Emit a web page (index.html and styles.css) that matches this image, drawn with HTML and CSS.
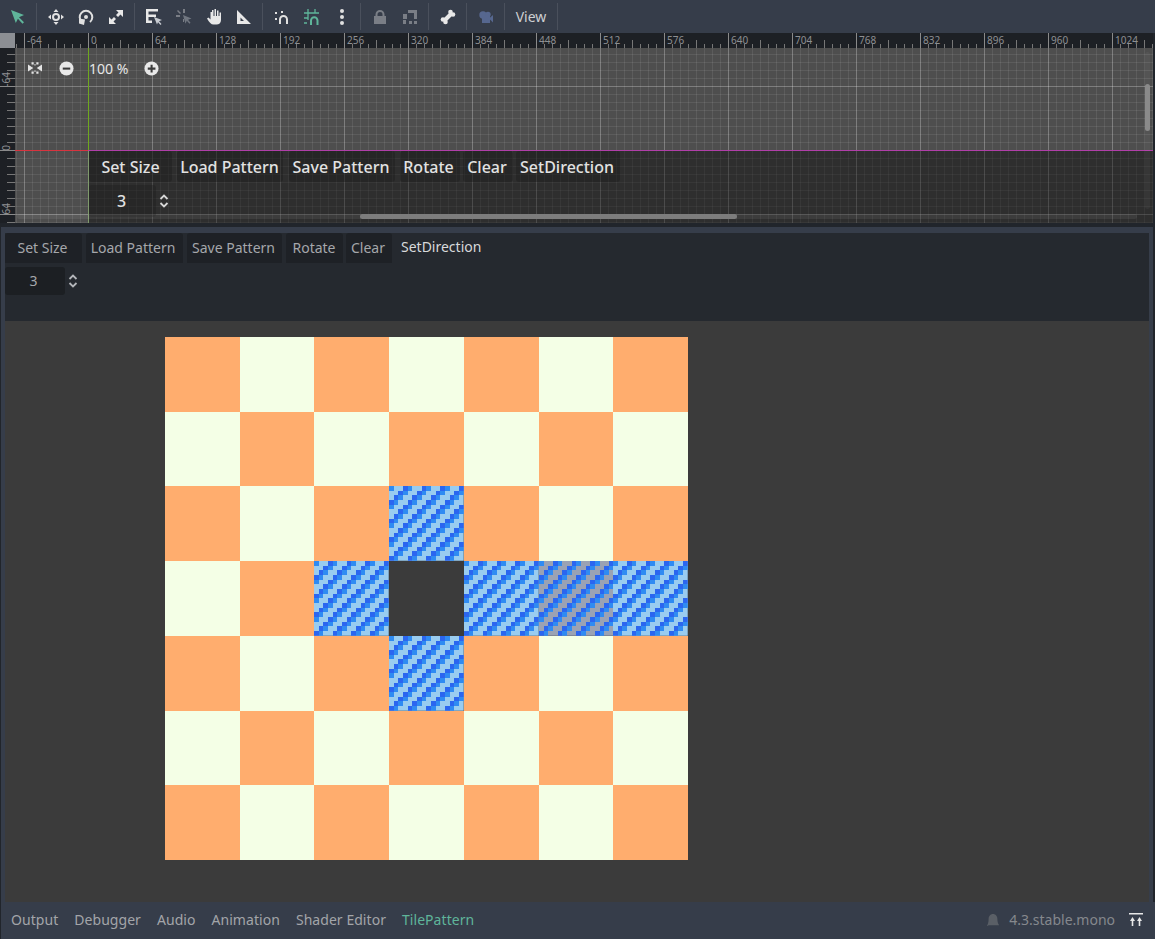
FILE: index.html
```html
<!DOCTYPE html>
<html lang="en">
<head>
    <meta charset="UTF-8">
    <title>TilePattern</title>
    <link rel="stylesheet" href="styles.css">
</head>

<body>
    <svg class="defs" width="0" height="0">
        <defs>
            <g id="t4">
                <path fill="#2b66f0" d="M3 0h1v1h-1zM2 1h1v1h-1zM1 2h1v1h-1zM0 3h1v1h-1z"/>
                <path fill="#2f8bf2" d="M0 0h1v1h-1zM3 1h1v1h-1zM2 2h1v1h-1zM1 3h1v1h-1z"/>
            </g>
            <g id="t8">
                <use href="#t4"/><use href="#t4" x="4"/><use href="#t4" y="4"/><use href="#t4" x="4" y="4"/>
            </g>
            <symbol id="tile" viewBox="0 0 16 16" shape-rendering="crispEdges">
                <rect width="16" height="16" fill="currentColor"/>
                <use href="#t8"/><use href="#t8" x="8"/><use href="#t8" y="8"/><use href="#t8" x="8" y="8"/>
            </symbol>
        </defs>
    </svg>

    <div class="toolbar">
        <div class="tool">
            <svg class="icon" viewBox="0 0 16 16"><path fill="#5fb59a" d="M1 1l13 5-5 2.200 5 5-1.500 1.500-4.600-5L5.800 14z"/></svg>
        </div>
        <span class="sep"></span>
        <div class="tool">
            <svg class="icon" viewBox="0 0 16 16"><path fill="#e0e0e0" d="M8 0l2.500 3h-5zM8 16l-2.500-3h5zM0 8l3-2.500v5zM16 8l-3 2.500v-5z"/><circle cx="8" cy="8" r="3" fill="none" stroke="#e0e0e0" stroke-width="2"/></svg>
        </div>
        <div class="tool">
            <svg class="icon" viewBox="0 0 16 16"><path fill="none" stroke="#e0e0e0" stroke-width="2" d="M4 13a6.300 6.300 0 1 1 8 0"/><path fill="#e0e0e0" d="M1 9.500l6 1-1 5.500-5-1.500z"/><circle cx="8" cy="8" r="2" fill="#e0e0e0"/></svg>
        </div>
        <div class="tool">
            <svg class="icon" viewBox="0 0 16 16"><path fill="#e8e8e8" d="M8 1h7v7l-2.500-2.500L10 8 8 6l2.500-2.500zM8 15H1V8l2.500 2.500L6 8l2 2-2.500 2.500z"/></svg>
        </div>
        <span class="sep"></span>
        <div class="tool">
            <svg class="icon" viewBox="0 0 16 16"><path fill="#e8e8e8" d="M0 0h12v2.500H2.500v3H10V8H2.500v3.500H6V14H0z"/><path fill="#c8ccd2" d="M8 8l8 3-3 1.300 2.500 2.700-1 1-2.500-2.700L11 15.500z"/></svg>
        </div>
        <div class="tool">
            <svg class="icon dim" viewBox="0 0 16 16"><path fill="#e0e0e0" d="M7 0h2v4H7zM0 6h4v2H0zM7 10h1v3H7zM2 1l3 3-1 1-3-3z"/><path fill="#c8ccd2" d="M7 6l8.500 3.500-3.500 1.300 2.500 3-1 1-2.700-3-1.300 3z"/></svg>
        </div>
        <div class="tool">
            <svg class="icon" viewBox="0 0 16 16"><path fill="#e8e8e8" d="M6 1h1.500v6H8.500V0H10v7h1V1.500h1.500V7h1V3.500H15V11c0 3-2 4.500-4.500 4.500h-3C5 15.500 3.500 13.500 1 9.500L2.500 8.500 4.500 10.500V3h1.500z"/></svg>
        </div>
        <div class="tool">
            <svg class="icon" viewBox="0 0 16 16"><path fill="#e8e8e8" fill-rule="evenodd" d="M1 1l14 14H1zM4.500 8.500V12h3.500z"/></svg>
        </div>
        <span class="sep"></span>
        <div class="tool">
            <svg class="icon" viewBox="0 0 16 16"><path fill="none" stroke="#e0e0e0" stroke-width="2" d="M6 15V10.500a3.500 3.500 0 0 1 7 0V15"/><path fill="#e0e0e0" d="M1 3h2v2H1zM7 2h2v2H7zM1 9h2v2H1z"/></svg>
        </div>
        <div class="tool">
            <svg class="icon" viewBox="0 0 16 16"><path fill="none" stroke="#5fb59a" stroke-width="1.300" d="M4 0v11M11 0v4M0 4h15M0 9h4M0 14h3"/><path fill="none" stroke="#5fb59a" stroke-width="2" d="M7 16v-4.500a3 3 0 0 1 6.500 0V16"/></svg>
        </div>
        <div class="tool">
            <svg class="icon" viewBox="0 0 16 16"><circle cx="8" cy="2" r="2" fill="#e0e0e0"/><circle cx="8" cy="8" r="2" fill="#e0e0e0"/><circle cx="8" cy="14" r="2" fill="#e0e0e0"/></svg>
        </div>
        <span class="sep"></span>
        <div class="tool">
            <svg class="icon dim" viewBox="0 0 16 16"><path fill="#e0e0e0" fill-rule="evenodd" d="M8 1a4.500 4.500 0 0 1 4.500 4.500V7H14v8H2V7h1.500V5.500A4.500 4.500 0 0 1 8 1zM8 3a2.500 2.500 0 0 0-2.500 2.500V7h5V5.500A2.500 2.500 0 0 0 8 3z"/></svg>
        </div>
        <div class="tool">
            <svg class="icon dim" viewBox="0 0 16 16"><path fill="#e0e0e0" d="M6 1h9v9h-3V4H6zM1 5h4v5H1zM1 11h3v4H1zM7 12h3v3H7zM12 12h3v3h-3z"/></svg>
        </div>
        <span class="sep"></span>
        <div class="tool">
            <svg class="icon" viewBox="0 0 16 16"><path fill="none" stroke="#e8e8e8" stroke-width="4" d="M4 12l8-8"/><circle cx="3" cy="10.500" r="2.300" fill="#e8e8e8"/><circle cx="5.500" cy="13" r="2.300" fill="#e8e8e8"/><circle cx="10.500" cy="3" r="2.300" fill="#e8e8e8"/><circle cx="13" cy="5.500" r="2.300" fill="#e8e8e8"/></svg>
        </div>
        <span class="sep"></span>
        <div class="tool">
            <svg class="icon" viewBox="0 0 16 16"><circle cx="5" cy="6" r="3.700" fill="#56678f"/><circle cx="10" cy="5.500" r="2.700" fill="#56678f"/><path fill="#56678f" d="M4 7h8v7H4zM11 9.500L15 6v7.500z"/></svg>
        </div>
        <span class="sep"></span>
        <div class="tool-text">View</div>
        <span class="sep"></span>
    </div>

    <div class="viewport-row">
        <div class="corner-col">
            <div class="corner"></div>
            <div class="ruler-v">
                <span>-64</span>
                <span>0</span>
                <span>64</span>
            </div>
        </div>
        <div class="viewport-col">
            <div class="ruler-h">
                <span>-64</span><span>0</span><span>64</span><span>128</span><span>192</span><span>256</span><span>320</span><span>384</span><span>448</span><span>512</span><span>576</span><span>640</span><span>704</span><span>768</span><span>832</span><span>896</span><span>960</span><span>1024</span>
            </div>
            <div class="viewport">
                <div class="scene-rect"></div>
                <div class="axis-y"></div>
                <div class="axis-x-neg"></div>
                <div class="axis-x-pos"></div>

                <div class="zoom-bar">
                    <svg class="icon-sm" viewBox="0 0 16 16"><path fill="#e4e4e4" d="M0 4l6 4-6 4zM16 4l-6 4 6 4zM4 1.500h2.500V4H4zM9.500 1.500H12V4H9.500zM4 12h2.500v2.500H4zM9.500 12H12v2.500H9.500zM6.500 4L8 5.500 9.500 4zM6.500 12L8 10.500 9.500 12z"/></svg>
                    <svg class="icon-zoom zoom-out" viewBox="0 0 16 16"><circle cx="8" cy="8" r="7.500" fill="#e8e8e8"/><path fill="#3a3a3a" d="M4 7h8v2.200H4z"/></svg>
                    <span class="zoom-label">100 %</span>
                    <svg class="icon-zoom" viewBox="0 0 16 16"><circle cx="8" cy="8" r="7.500" fill="#e8e8e8"/><path fill="#3a3a3a" d="M4 7h3V4h2.200v3h3v2.200h-3v3H7v-3H4z"/></svg>
                </div>

                <div class="scene-ui">
                    <div class="scene-row">
                        <button class="scene-btn b-size">Set Size</button>
                        <button class="scene-btn b-load">Load Pattern</button>
                        <button class="scene-btn b-save">Save Pattern</button>
                        <button class="scene-btn b-rotate">Rotate</button>
                        <button class="scene-btn b-clear">Clear</button>
                        <button class="scene-btn b-dir">SetDirection</button>
                    </div>
                    <div class="scene-spin">
                        <div class="scene-value">3</div>
                        <svg class="spin-arrows" viewBox="0 0 10 16"><path fill="none" stroke="#d8d8d8" stroke-width="1.800" d="M1.500 6L5 2.500 8.500 6M1.500 10L5 13.500 8.500 10"/></svg>
                    </div>
                </div>

                <div class="vscroll"><div class="vthumb"></div></div>
                <div class="hscroll"><div class="hthumb"></div></div>
            </div>
        </div>
    </div>

    <div class="editor">
        <div class="dock">
            <div class="dock-row">
                <button class="dock-btn d-size">Set Size</button>
                <button class="dock-btn d-load">Load Pattern</button>
                <button class="dock-btn d-save">Save Pattern</button>
                <button class="dock-btn d-rotate">Rotate</button>
                <button class="dock-btn d-clear">Clear</button>
                <div class="dock-flat">SetDirection</div>
            </div>
            <div class="dock-spin">
                <div class="dock-value">3</div>
                <svg class="spin-arrows" viewBox="0 0 10 16"><path fill="none" stroke="#b4b6ba" stroke-width="1.800" d="M1.500 6L5 2.500 8.500 6M1.500 10L5 13.500 8.500 10"/></svg>
            </div>
        </div>
        <div class="stage">
            <div class="board">
                <div class="o"></div><div class="w"></div><div class="o"></div><div class="w"></div><div class="o"></div><div class="w"></div><div class="o"></div>
                <div class="w"></div><div class="o"></div><div class="w"></div><div class="o"></div><div class="w"></div><div class="o"></div><div class="w"></div>
                <div class="o"></div><div class="w"></div><div class="o"></div><div class="p"><svg><use href="#tile"/></svg></div><div class="o"></div><div class="w"></div><div class="o"></div>
                <div class="w"></div><div class="o"></div><div class="p"><svg><use href="#tile"/></svg></div><div></div><div class="p"><svg><use href="#tile"/></svg></div><div class="p gray"><svg><use href="#tile"/></svg></div><div class="p"><svg><use href="#tile"/></svg></div>
                <div class="o"></div><div class="w"></div><div class="o"></div><div class="p"><svg><use href="#tile"/></svg></div><div class="o"></div><div class="w"></div><div class="o"></div>
                <div class="w"></div><div class="o"></div><div class="w"></div><div class="o"></div><div class="w"></div><div class="o"></div><div class="w"></div>
                <div class="o"></div><div class="w"></div><div class="o"></div><div class="w"></div><div class="o"></div><div class="w"></div><div class="o"></div>
            </div>
        </div>
    </div>

    <div class="bottom-bar">
        <span class="tab">Output</span>
        <span class="tab">Debugger</span>
        <span class="tab">Audio</span>
        <span class="tab">Animation</span>
        <span class="tab">Shader Editor</span>
        <span class="tab active">TilePattern</span>
        <div class="bottom-right">
            <svg class="bell" viewBox="0 0 16 16"><path fill="#5a5f66" d="M8 1c3 0 5 2.500 5 5.500 0 3 .5 5 2 7.500H3l-2 1c1-2 2-4 2-8.500C3 3.500 5 1 8 1z"/></svg>
            <span class="version">4.3.stable.mono</span>
            <svg class="expand" viewBox="0 0 16 16"><path fill="#e8e8e8" d="M1 1h14v1.500H1zM4.500 5L7 9H5.300v5H3.700V9H2zM11.500 5L14 9h-1.700v5h-1.600V9H9z"/></svg>
        </div>
    </div>
</body>
</html>
```

FILE: styles.css
```css
* {
    box-sizing: border-box;
}

html, body {
    margin: 0;
    height: 939px;
    overflow: hidden;
}

body {
    width: 1155px;
    background: #21252b;
    font-family: "Noto Sans", sans-serif;
    display: flex;
    flex-direction: column;
}

.defs {
    position: absolute;
}

/* top toolbar */
.toolbar {
    height: 33px;
    flex: none;
    background: #363d4a;
    display: flex;
    align-items: center;
    padding-left: 3px;
}

.tool {
    width: 30px;
    height: 31px;
    display: flex;
    align-items: center;
    justify-content: center;
}

.tool-text {
    width: 48px;
    padding-right: 4px;
    text-align: center;
    font-size: 14px;
    color: #cdcfd2;
}

.sep {
    width: 1px;
    height: 27px;
    margin: 0 4px 0 3px;
    background: #4a505c;
}

.toolbar .tool-text + .sep {
    margin-left: 0;
}

.icon {
    width: 16px;
    height: 16px;
}

.icon.dim {
    opacity: 0.4;
}

/* viewport with rulers */
.viewport-row {
    display: flex;
    height: 190px;
    flex: none;
    padding-right: 2px;
}

.corner-col {
    width: 15px;
    flex: none;
    display: flex;
    flex-direction: column;
}

.corner {
    height: 15px;
    background: #8c8f94;
}

.ruler-v {
    flex: 1;
    background-color: #1d2025;
    background-image:
        linear-gradient(to bottom, #8a8a8a 1px, transparent 1px),
        linear-gradient(to bottom, #777 1px, transparent 1px);
    background-size: 100% 64px, 8px 8px;
    background-position: 0 38px, 100% 6px;
    background-repeat: repeat-y;
    position: relative;
}

.ruler-v span {
    position: absolute;
    left: 1px;
    width: 11px;
    writing-mode: vertical-rl;
    transform: rotate(180deg);
    font-size: 10px;
    line-height: 11px;
    color: #8d8f92;
}

.ruler-v span:nth-child(1) { top: 24px; }
.ruler-v span:nth-child(2) { top: 97px; }
.ruler-v span:nth-child(3) { top: 155px; }

.viewport-col {
    flex: 1;
    display: flex;
    flex-direction: column;
    min-width: 0;
}

.ruler-h {
    height: 15px;
    flex: none;
    display: flex;
    overflow: hidden;
    background-color: #1d2025;
    background-image:
        linear-gradient(to right, #8a8a8a 1px, transparent 1px),
        linear-gradient(to right, #777 1px, transparent 1px),
        linear-gradient(to right, #777 1px, transparent 1px);
    background-size: 64px 100%, 32px 8px, 8px 4px;
    background-position: 9px 0, 9px 100%, 1px 100%;
    background-repeat: repeat-x;
    padding-left: 9px;
    font-size: 10px;
    line-height: 14px;
    color: #8d8f92;
}

.ruler-h span {
    width: 64px;
    flex: none;
    padding-left: 3px;
}

.viewport {
    flex: 1;
    position: relative;
    overflow: hidden;
    background-color: #4e4e4e;
    background-image:
        linear-gradient(to right, rgba(255, 255, 255, 0.2) 1px, transparent 1px),
        linear-gradient(to bottom, rgba(255, 255, 255, 0.2) 1px, transparent 1px),
        linear-gradient(to right, rgba(255, 255, 255, 0.08) 1px, transparent 1px),
        linear-gradient(to bottom, rgba(255, 255, 255, 0.08) 1px, transparent 1px);
    background-size: 64px 64px, 64px 64px, 8px 8px, 8px 8px;
    background-position: 9px 0, 0 38px, 1px 0, 0 6px;
}

.scene-rect {
    position: absolute;
    left: 73px;
    top: 103px;
    right: 0;
    bottom: 0;
    background: rgba(0, 0, 0, 0.4);
}

.axis-y {
    position: absolute;
    left: 73px;
    top: 0;
    bottom: 0;
    width: 1px;
    background: linear-gradient(to bottom, #6fa81e 102px, #7f9a6c 103px);
}

.axis-x-neg {
    position: absolute;
    left: 0;
    top: 102px;
    width: 73px;
    height: 1px;
    background: #d8343f;
}

.axis-x-pos {
    position: absolute;
    left: 73px;
    right: 0;
    top: 102px;
    height: 1px;
    background: #b03fa8;
}

.zoom-bar {
    position: absolute;
    left: 13px;
    top: 12px;
    height: 16px;
    display: flex;
    align-items: center;
}

.icon-sm {
    width: 14px;
    height: 14px;
}

.icon-zoom {
    width: 15px;
    height: 15px;
}

.zoom-out {
    margin-left: 17px;
}

.zoom-label {
    width: 70px;
    padding-left: 15px;
    font-size: 14px;
    white-space: nowrap;
    color: #e6e6e6;
}

/* buttons that the plugin draws in the scene */
.scene-ui {
    position: absolute;
    left: 74px;
    top: 103px;
}

.scene-row {
    display: flex;
    height: 31px;
    width: 540px;
}

.scene-btn {
    height: 31px;
    padding: 0;
    border: 0;
    border-radius: 3px;
    background: rgba(28, 28, 28, 0.4);
    font-family: inherit;
    font-size: 16px;
    font-weight: 500;
    color: #e2e2e2;
}

.b-size { width: 83px; margin-right: 5px; }
.b-load { width: 106px; margin-right: 6px; padding-right: 1px; }
.b-save { width: 106px; margin-right: 5px; padding-right: 2px; }
.b-rotate { width: 60px; margin-right: 3px; padding-right: 3px; }
.b-clear { width: 50px; margin-right: 3px; padding-right: 2px; }
.b-dir { width: 104px; padding-right: 2px; }

.scene-spin {
    display: flex;
    align-items: center;
    margin-top: 3px;
}

.scene-value {
    width: 67px;
    height: 32px;
    padding-right: 2px;
    border-radius: 3px;
    background: rgba(30, 30, 30, 0.4);
    text-align: center;
    font-size: 16px;
    font-weight: 500;
    line-height: 32px;
    color: #e2e2e2;
}

.spin-arrows {
    width: 10px;
    height: 16px;
    margin-left: 3px;
}

.vscroll {
    position: absolute;
    right: 3px;
    top: 4px;
    bottom: 14px;
    width: 5px;
    border-radius: 3px;
    background: rgba(255, 255, 255, 0.04);
}

.vthumb {
    width: 5px;
    height: 47px;
    margin-top: 32px;
    border-radius: 3px;
    background: #8a8a8a;
}

.hscroll {
    position: absolute;
    left: 2px;
    right: 16px;
    bottom: 4px;
    height: 5px;
    border-radius: 3px;
    background: rgba(255, 255, 255, 0.07);
}

.hthumb {
    width: 377px;
    height: 5px;
    margin-left: 343px;
    border-radius: 3px;
    background: #7c7c7c;
}

/* main editor */
.editor {
    flex: none;
    height: 675px;
    margin: 4px 2px 0 1px;
    padding: 6px 4px 0;
    background: #363d4a;
    display: flex;
    flex-direction: column;
}

.dock {
    height: 88px;
    flex: none;
    background: #25292f;
}

.dock-row {
    display: flex;
    height: 30px;
}

.dock-btn {
    height: 30px;
    padding: 0 0 2px;
    border: 0;
    margin-right: 4px;
    border-radius: 3px 3px 0 0;
    background: #1e2126;
    font-family: inherit;
    font-size: 14px;
    color: #a5a7ab;
}

.d-size { width: 77px; padding-right: 2px; }
.d-load { width: 97px; padding-right: 3px; }
.d-save { width: 95px; padding-right: 2px; }
.d-rotate { width: 57px; margin-right: 3px; padding-right: 1px; }
.d-clear { width: 46px; margin-right: 9px; padding-right: 2px; }

.dock-flat {
    font-size: 14px;
    line-height: 28px;
    color: #d8d9db;
}

.dock-spin {
    display: flex;
    align-items: center;
    margin-top: 4px;
}

.dock-value {
    width: 60px;
    height: 28px;
    padding-right: 3px;
    border-radius: 3px;
    background: #1c1f23;
    text-align: center;
    font-size: 14px;
    line-height: 28px;
    color: #a5a7ab;
}

.stage {
    flex: 1;
    background: #3b3b3b;
    padding: 16px 0 0 160px;
}

.board {
    width: 523px;
    height: 523px;
    display: grid;
    grid-template-columns: repeat(7, 1fr);
    grid-template-rows: repeat(7, 1fr);
}

.o {
    background: #ffad6e;
}

.w {
    background: #f4ffe6;
}

.p {
    color: #99ccf0;
    min-width: 0;
    min-height: 0;
}

.p.gray {
    color: #9aa2b4;
}

.p svg {
    display: block;
    width: 100%;
    height: 100%;
}

/* bottom panel tabs */
.bottom-bar {
    flex: 1;
    background: #363d4a;
    margin-left: 1px;
    display: flex;
    align-items: center;
    gap: 16px;
    padding: 0 0 2px 10px;
    font-size: 14px;
    letter-spacing: 0.05px;
    color: #a3a5a9;
}

.tab.active {
    color: #5fb59a;
}

.bottom-right {
    margin-left: auto;
    display: flex;
    align-items: center;
    padding-right: 11px;
}

.bell {
    width: 14px;
    height: 14px;
    margin-right: 9px;
}

.version {
    letter-spacing: 0;
    color: #85888d;
    margin-right: 13px;
}

.expand {
    width: 16px;
    height: 16px;
}
```
